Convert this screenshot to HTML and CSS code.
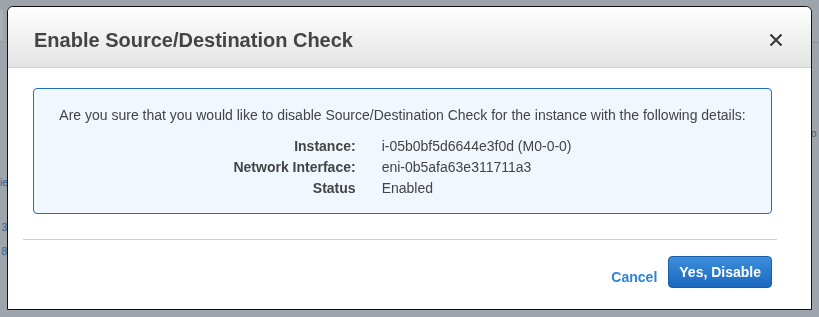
FILE: index.html
```html
<!DOCTYPE html>
<html lang="en">
<head>
    <meta charset="UTF-8">
    <meta name="viewport" content="width=device-width, initial-scale=1.0">
    <title>Enable Source/Destination Check</title>
    <link rel="stylesheet" href="styles.css">
</head>
<body>
    <div class="backdrop">
        <div class="page-side">
            <div class="side-tab"></div>
            <div class="side-link side-link-first">ie</div>
            <div class="side-link side-link-second">3</div>
            <div class="side-link side-link-third">8</div>
        </div>
        <div class="page-main"></div>
        <div class="page-right">
            <div class="right-rule"></div>
            <div class="right-text">o</div>
        </div>
    </div>

    <div class="modal">
        <div class="modal-header">
            <h2 class="modal-title">Enable Source/Destination Check</h2>
            <button class="modal-close" aria-label="Close">
                <svg width="14" height="14" viewBox="0 0 14 14">
                    <path d="M1.5 1.5 L12.5 12.5 M12.5 1.5 L1.5 12.5" stroke="#3a3a3a" stroke-width="2.2" fill="none"/>
                </svg>
            </button>
        </div>

        <div class="modal-body">
            <div class="info-box">
                <p class="info-text">Are you sure that you would like to disable Source/Destination Check for the instance with the following details:</p>
                <div class="details">
                    <span class="detail-label">Instance:</span>
                    <span class="detail-value">i-05b0bf5d6644e3f0d (M0-0-0)</span>
                    <span class="detail-label">Network Interface:</span>
                    <span class="detail-value">eni-0b5afa63e311711a3</span>
                    <span class="detail-label">Status</span>
                    <span class="detail-value">Enabled</span>
                </div>
            </div>
        </div>

        <div class="modal-divider"></div>

        <div class="modal-footer">
            <a class="cancel-link" href="#">Cancel</a>
            <button class="confirm-btn">Yes, Disable</button>
        </div>
    </div>
</body>
</html>
```

FILE: styles.css
```css
* { box-sizing: border-box; }
html, body {
    margin: 0;
    height: 100%;
}
body {
    font-family: 'Liberation Sans', Arial, sans-serif;
    background: #9ea4ab;
    color: #444;
    overflow: hidden;
}

/* page behind the dialog */
.backdrop {
    display: flex;
    height: 100%;
}
.page-side {
    width: 7px;
    padding-top: 10px;
    text-align: right;
}
.side-tab {
    height: 32px;
    width: 3px;
    background: #a9aeb4;
    border-bottom: 1px solid #939aa1;
}
.side-link {
    font-size: 10px;
    color: #2f5f93;
    line-height: 14px;
}
.side-link-first { margin-top: 134px; }
.side-link-second { margin-top: 31px; }
.side-link-third { margin-top: 10px; }
.page-main { flex: 1; }
.page-right { width: 8px; }
.right-rule {
    margin-top: 42px;
    border-top: 1px solid #8d949b;
}
.right-text {
    margin-top: 85px;
    font-size: 10px;
    color: #55595e;
}

/* dialog */
.modal {
    position: fixed;
    left: 7px;
    top: 6px;
    width: 805px;
    height: 304px;
    background: #fff;
    border: 1px solid #111;
    border-radius: 6px 6px 0 0;
    overflow: hidden;
}
.modal-header {
    display: flex;
    justify-content: space-between;
    align-items: flex-start;
    height: 61px;
    padding: 0 28px 0 26px;
    background: linear-gradient(#ffffff, #e3e3e3);
    border-bottom: 1px solid #cfcfcf;
    border-radius: 5px 5px 0 0;
}
.modal-title {
    margin: 22px 0 0;
    font-size: 20px;
    line-height: 23px;
    font-weight: bold;
    color: #444;
}
.modal-close {
    margin-top: 26px;
    padding: 0;
    border: none;
    background: none;
    width: 14px;
    height: 14px;
    cursor: pointer;
}
.modal-close svg { display: block; }

.modal-body {
    padding: 20px 39px 0 25px;
}
.info-box {
    height: 126px;
    padding: 16px 10px 0;
    background: #f0f7fe;
    border: 1px solid #1f6ec0;
    border-radius: 4px;
    font-size: 14px;
    line-height: 21px;
}
.info-text {
    margin: 0 0 10px;
    text-align: center;
}
.details {
    display: grid;
    grid-template-columns: auto auto;
    column-gap: 26px;
    justify-content: center;
}
.detail-label {
    text-align: right;
    font-weight: bold;
}

.modal-divider {
    margin: 25px 34px 0 15px;
    border-top: 1px solid #cfcfcf;
}

.modal-footer {
    display: flex;
    justify-content: flex-end;
    align-items: flex-start;
    gap: 11px;
    padding: 16px 39px 0 0;
}
.cancel-link {
    margin-top: 11px;
    font-size: 14px;
    line-height: 20px;
    font-weight: bold;
    color: #2e83d6;
    text-decoration: none;
}
.confirm-btn {
    height: 32px;
    padding: 0 10px;
    font-family: inherit;
    font-size: 14px;
    font-weight: bold;
    color: #fff;
    background: linear-gradient(#3b8edb, #1b69bf);
    border: 1px solid #1a5ea8;
    border-radius: 4px;
    cursor: pointer;
}
```
